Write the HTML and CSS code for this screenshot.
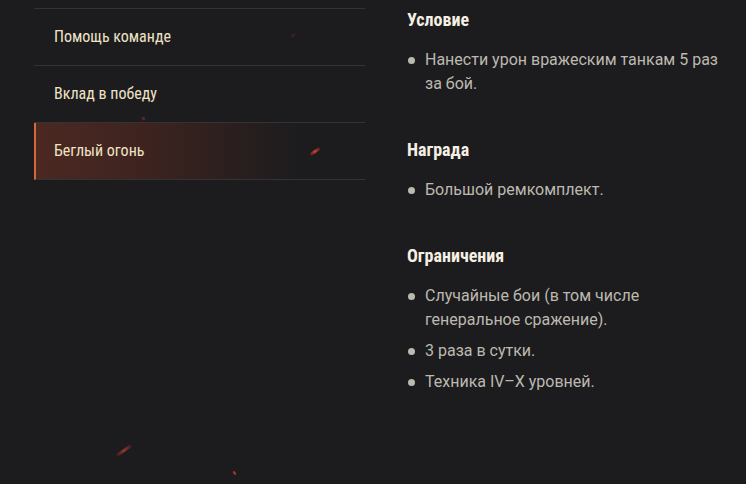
FILE: index.html
```html
<!DOCTYPE html>
<html lang="ru">
<head>
  <meta charset="UTF-8">
  <meta name="viewport" content="width=device-width, initial-scale=1.0">
  <title>Боевые задачи</title>
  <link rel="stylesheet" href="styles.css">
</head>
<body>
  <div class="page">
    <ul class="tabs">
      <li class="tab">Помощь команде</li>
      <li class="tab">Вклад в победу</li>
      <li class="tab active">Беглый огонь</li>
    </ul>

    <div class="details">
      <div class="block">
        <h3>Условие</h3>
        <ul class="points">
          <li>Нанести урон вражеским танкам 5 раз за бой.</li>
        </ul>
      </div>

      <div class="block">
        <h3>Награда</h3>
        <ul class="points">
          <li>Большой ремкомплект.</li>
        </ul>
      </div>

      <div class="block">
        <h3>Ограничения</h3>
        <ul class="points">
          <li>Случайные бои (в том числе генеральное сражение).</li>
          <li>3 раза в сутки.</li>
          <li>Техника IV–X уровней.</li>
        </ul>
      </div>
    </div>

    <!-- decorative sparks -->
    <span class="spark s1"></span>
    <span class="spark s2"></span>
    <span class="spark s3"></span>
    <span class="spark s4"></span>
    <span class="spark s5"></span>
  </div>
</body>
</html>
```

FILE: styles.css
```css
body {
  margin: 0;
  background-color: #1c1c1e;
  font-family: 'Roboto', 'Liberation Sans', sans-serif;
  height: 100vh;
  overflow: hidden;
}

.page {
  position: relative;
  display: flex;
  padding-left: 34px;
  height: 100%;
}

.tabs {
  list-style: none;
  margin: 8px 0 0 0;
  padding: 0;
  width: 331px;
  border-top: 1px solid #333335;
  align-self: flex-start;
}

.tab {
  height: 56px;
  line-height: 56px;
  padding-left: 20px;
  border-bottom: 1px solid #333335;
  color: #efe3c6;
  font-family: 'Roboto Condensed', 'Roboto', sans-serif;
  font-stretch: condensed;
  font-size: 16px;
}

.tab.active {
  border-left: 2px solid #d5683f;
  padding-left: 18px;
  background: linear-gradient(to right, #4c2822 0%, #3c231f 35%, rgba(40, 28, 28, 0) 80%);
}

.details {
  margin-left: 42px;
  padding-top: 10px;
  width: 318px;
}

.block {
  margin-bottom: 44px;
}

h3 {
  margin: 0 0 18px 0;
  color: #f6f0e4;
  font-family: 'Roboto Condensed', 'Roboto', sans-serif;
  font-stretch: condensed;
  font-weight: bold;
  font-size: 18px;
  line-height: 20px;
}

.points {
  list-style: none;
  margin: 0;
  padding: 0;
}

.points li {
  position: relative;
  padding-left: 18px;
  margin-bottom: 7px;
  color: #bdb9b0;
  font-size: 16px;
  line-height: 24px;
}

.points li:last-child {
  margin-bottom: 0;
}

.points li::before {
  content: '';
  position: absolute;
  left: 1px;
  top: 9px;
  width: 7px;
  height: 7px;
  border-radius: 50%;
  background-color: #bdb9b0;
}

.spark {
  position: absolute;
  height: 3px;
  border-radius: 2px;
  background: linear-gradient(to right, rgba(200, 40, 30, 0.2), #c8402f, rgba(200, 40, 30, 0.2));
  transform: rotate(-35deg);
}

.s1 { left: 309px; top: 150px; width: 12px; }
.s2 { left: 115px; top: 449px; width: 18px; opacity: 0.7; }
.s3 { left: 233px; top: 471px; width: 3px; height: 4px; }
.s4 { left: 141px; top: 117px; width: 5px; opacity: 0.4; }
.s5 { left: 290px; top: 34px; width: 6px; opacity: 0.2; }
```
